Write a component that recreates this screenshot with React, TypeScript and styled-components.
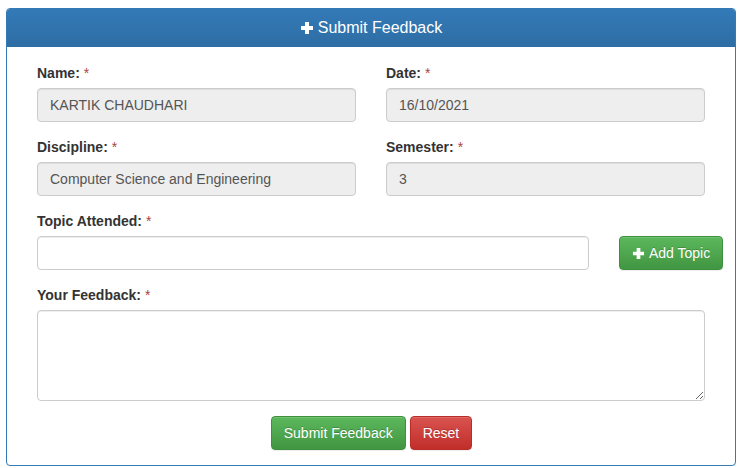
import React from "react";
import styled, { createGlobalStyle } from "styled-components";

const Global = createGlobalStyle`
  html, body { margin: 0; padding: 0; background: #fff; }
  body {
    font-family: "Liberation Sans", Arial, Helvetica, sans-serif;
    font-size: 14px;
    line-height: 20px;
    color: #333;
  }
  * { box-sizing: border-box; }
`;

const Panel = styled.div`
  width: 730px;
  margin: 8px 0 0 6px;
  border: 1px solid #337ab7;
  border-radius: 4px;
  background: #fff;
  box-shadow: 0 1px 1px rgba(0, 0, 0, 0.05);
  overflow: hidden;
`;

const Heading = styled.div`
  display: flex;
  align-items: center;
  justify-content: center;
  gap: 4px;
  padding: 9px 15px;
  line-height: 20px;
  font-size: 16px;
  color: #fff;
  background-image: linear-gradient(to bottom, #337ab7 0, #2e6da4 100%);
`;

const Body = styled.div`
  padding: 16px 30px 15px 30px;
`;

const Row = styled.div<{ $cols: string }>`
  display: grid;
  grid-template-columns: ${(p) => p.$cols};
  column-gap: 30px;
`;

const Group = styled.div`
  margin-bottom: 15px;
`;

const Label = styled.label`
  display: block;
  font-weight: bold;
  margin-bottom: 5px;
  line-height: 20px;
`;

const Star = styled.span`
  color: #a94442;
  font-weight: normal;
  margin-left: 4px;
`;

const Input = styled.input`
  display: block;
  width: 100%;
  height: 34px;
  padding: 6px 12px;
  font-family: inherit;
  font-size: 14px;
  line-height: 20px;
  color: #555;
  background: ${(p) => (p.readOnly ? "#eee" : "#fff")};
  border: 1px solid #ccc;
  border-radius: 4px;
  box-shadow: inset 0 1px 1px rgba(0, 0, 0, 0.075);
  outline: none;
`;

const TextArea = styled.textarea`
  display: block;
  width: 100%;
  height: 91px;
  padding: 6px 12px;
  font-family: inherit;
  font-size: 14px;
  color: #555;
  background: #fff;
  border: 1px solid #ccc;
  border-radius: 4px;
  box-shadow: inset 0 1px 1px rgba(0, 0, 0, 0.075);
  outline: none;
  resize: vertical;
`;

const Btn = styled.button<{ $variant: "success" | "danger" }>`
  display: inline-flex;
  align-items: center;
  gap: 4px;
  height: 34px;
  padding: 6px 12px;
  font-family: inherit;
  font-size: 14px;
  line-height: 20px;
  color: #fff;
  border-radius: 4px;
  cursor: pointer;
  white-space: nowrap;
  text-shadow: 0 -1px 0 rgba(0, 0, 0, 0.2);
  box-shadow: inset 0 1px 0 rgba(255, 255, 255, 0.15), 0 1px 1px rgba(0, 0, 0, 0.075);
  border: 1px solid ${(p) => (p.$variant === "success" ? "#3e8f3e" : "#b92c28")};
  background-image: ${(p) =>
    p.$variant === "success"
      ? "linear-gradient(to bottom, #5cb85c 0, #419641 100%)"
      : "linear-gradient(to bottom, #d9534f 0, #c12e2a 100%)"};
`;

const Actions = styled.div`
  display: flex;
  justify-content: center;
  gap: 4px;
  padding-left: 1px;
`;

const TopicButtonCell = styled.div`
  display: flex;
  align-items: flex-end;
  margin-bottom: 15px;
`;

const Plus = ({ size = 14 }: { size?: number }) => (
  <svg width={size} height={size} viewBox="0 0 14 14" aria-hidden="true">
    <path d="M5 1h4v4h4v4H9v4H5V9H1V5h4z" fill="#fff" />
  </svg>
);

export default function App() {
  return (
    <>
      <Global />
      <Panel>
        <Heading>
          <Plus size={14} />
          <span>Submit Feedback</span>
        </Heading>
        <Body>
          <Row $cols="1fr 1fr">
            <Group>
              <Label>
                Name:<Star>*</Star>
              </Label>
              <Input readOnly value="KARTIK CHAUDHARI" />
            </Group>
            <Group>
              <Label>
                Date:<Star>*</Star>
              </Label>
              <Input readOnly value="16/10/2021" />
            </Group>
          </Row>
          <Row $cols="1fr 1fr">
            <Group>
              <Label>
                Discipline:<Star>*</Star>
              </Label>
              <Input readOnly value="Computer Science and Engineering" />
            </Group>
            <Group>
              <Label>
                Semester:<Star>*</Star>
              </Label>
              <Input readOnly value="3" />
            </Group>
          </Row>
          <Row $cols="552px auto">
            <Group>
              <Label>
                Topic Attended:<Star>*</Star>
              </Label>
              <Input />
            </Group>
            <TopicButtonCell>
              <Btn $variant="success" type="button">
                <Plus size={13} />
                Add Topic
              </Btn>
            </TopicButtonCell>
          </Row>
          <Group>
            <Label>
              Your Feedback:<Star>*</Star>
            </Label>
            <TextArea />
          </Group>
          <Actions>
            <Btn $variant="success" type="button">Submit Feedback</Btn>
            <Btn $variant="danger" type="button">Reset</Btn>
          </Actions>
        </Body>
      </Panel>
    </>
  );
}
